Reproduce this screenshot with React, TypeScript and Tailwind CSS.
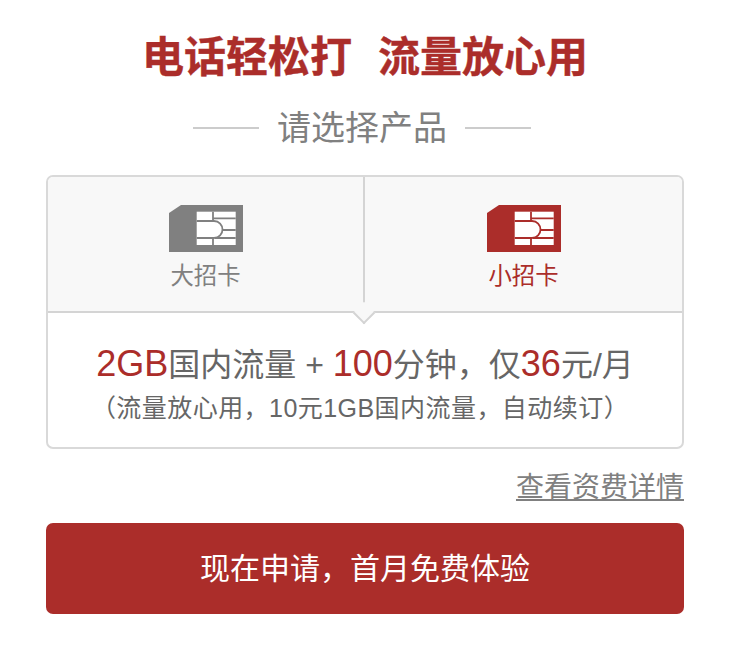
const SimIcon = ({ color }: { color: string }) => (
  <svg width="74" height="47" viewBox="0 0 74 47" className="block">
    <path d="M12 0H74V47H0V8Z" fill={color} />
    <rect x="27.7" y="6.7" width="39" height="33.3" fill="#fff" />
    <g fill="none" stroke={color} strokeWidth="1.8">
      <path d="M27.7 16H45C50 16 53.5 20 53.5 24.5C53.5 29 50 33 45 33H27.7" />
      <path d="M44 6.7V16M44 33V40" />
      <path d="M44 13.3H66.7M53.5 25H66.7M46 33H66.7" />
    </g>
  </svg>
);

const Tab = ({ label, color }: { label: string; color: string }) => (
  <div className="flex flex-1 flex-col items-center pt-[28px]">
    <SimIcon color={color} />
    <span className="mt-[9px] text-[23.4px] leading-[30px]" style={{ color }}>
      {label}
    </span>
  </div>
);

export default function App() {
  return (
    <div className="h-[649px] w-[730px] bg-white px-[46px] font-['Liberation_Sans','Noto_Sans_CJK_SC',sans-serif]">
      <h1 className="flex justify-center pt-[33px] text-[42px] leading-[50px] font-bold text-[#ab2d2a] [-webkit-text-stroke:0.4px_#ab2d2a]">
        <span>电话轻松打</span>
        <span className="w-[26px]" />
        <span>流量放心用</span>
      </h1>

      <div className="mt-[20px] flex items-center gap-[18px] pl-[147px] text-[#808080]">
        <div className="h-[2px] w-[66px] bg-[#cccccc]" />
        <span className="text-[34px] leading-[50px]">请选择产品</span>
        <div className="h-[2px] w-[66px] bg-[#cccccc]" />
      </div>

      <div className="mt-[22px] h-[274px] overflow-hidden rounded-[7px] border-2 border-[#d9d9d9]">
        <div className="relative flex h-[136px] border-b-2 border-[#d4d4d4] bg-[#f8f8f8]">
          <div className="flex w-[317px] border-r-2 border-[#d4d4d4]">
            <Tab label="大招卡" color="#808080" />
          </div>
          <Tab label="小招卡" color="#ab2d2a" />
          <div className="absolute bottom-[-10px] left-[308px] h-[16px] w-[16px] rotate-45 border-r-2 border-b-2 border-[#d4d4d4] bg-[#f8f8f8]" />
        </div>
        <div className="pt-[30px] text-center text-[#666666]">
          <p className="text-[32px] leading-[42px]">
            <span className="text-[36px] text-[#ab2d2a]">2GB</span>国内流量 +{' '}
            <span className="text-[36px] text-[#ab2d2a]">100</span>分钟，仅
            <span className="text-[36px] text-[#ab2d2a]">36</span>元/月
          </p>
          <p className="mt-[6px] pr-[10px] text-[25px] leading-[32px] tracking-[0.45px]">（流量放心用，10元1GB国内流量，自动续订）</p>
        </div>
      </div>

      <div className="mt-[22px] flex justify-end">
        <a className="text-[28px] leading-[34px] text-[#808080] underline">查看资费详情</a>
      </div>

      <button className="mt-[18px] h-[91px] w-full rounded-[7px] bg-[#ab2d2a] text-[30px] text-white">
        现在申请，首月免费体验
      </button>
    </div>
  );
}
